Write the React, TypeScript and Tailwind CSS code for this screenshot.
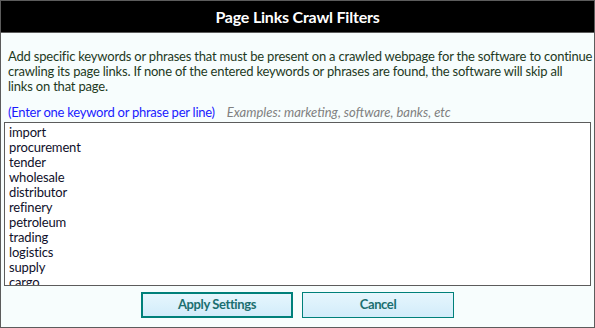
import React from "react";

const items = [
  "import",
  "procurement",
  "tender",
  "wholesale",
  "distributor",
  "refinery",
  "petroleum",
  "trading",
  "logistics",
  "supply",
  "cargo",
];

export default function App() {
  return (
    <div
      className="w-[595px] h-[328px] border border-[#5c5c5c] bg-[#f7fdfd] flex flex-col overflow-hidden"
      style={{ fontFamily: "Lato, 'Open Sans', sans-serif" }}
    >
      <div className="h-[32px] shrink-0 bg-black border-b border-[#5c5c5c] flex items-center justify-center">
        <span className="text-white font-bold text-[16px] tracking-[-0.2px] leading-none">Page Links Crawl Filters</span>
      </div>
      <div className="pl-[7px] pr-[1px] pt-[16px] text-[13px] tracking-[-0.2px] leading-[15px] text-[#1e3a1e] whitespace-nowrap">
        Add specific keywords or phrases that must be present on a crawled webpage for the software to continue
        <br />
        crawling its page links. If none of the entered keywords or phrases are found, the software will skip all
        <br />
        links on that page.
      </div>
      <div className="px-[7px] mt-[11px] text-[13px] leading-[15px] flex gap-[12px]">
        <span className="text-[#1a1aff] tracking-[-0.25px]">(Enter one keyword or phrase per line)</span>
        <span className="text-[#808080] italic">Examples: marketing, software, banks, etc</span>
      </div>
      <div className="mx-[3px] mt-[2px] h-[164px] shrink-0 border border-[#5c5c5c] bg-white overflow-hidden pl-[4px] pt-[2px] text-[13px] tracking-[-0.15px] leading-[15px] text-[#10102a]">
        {items.map((i) => (
          <div key={i}>{i}</div>
        ))}
      </div>
      <div className="flex justify-center gap-[9px] mt-[6px]">
        <button className="w-[152px] h-[26px] border-2 border-[#00807a] bg-gradient-to-b from-[#e6f6fd] to-[#d2ecfa] text-[#1b6f70] font-bold text-[13px] tracking-[-0.4px]">
          Apply Settings
        </button>
        <button className="w-[152px] h-[26px] border border-[#00807a] bg-gradient-to-b from-[#e6f6fd] to-[#d2ecfa] text-[#1b6f70] font-bold text-[13px] tracking-[-0.4px]">
          Cancel
        </button>
      </div>
    </div>
  );
}
